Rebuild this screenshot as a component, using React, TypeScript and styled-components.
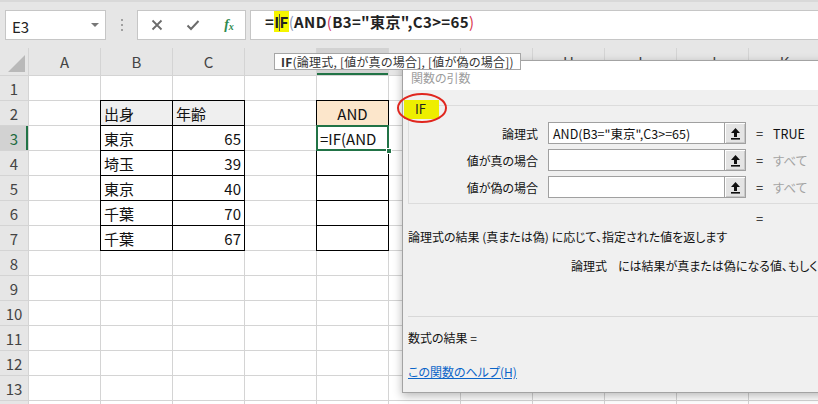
import styled, { createGlobalStyle } from 'styled-components';

const GlobalStyles = createGlobalStyle`
  *, *::before, *::after { box-sizing: border-box; }
  html, body { margin: 0; padding: 0; background: #fff; }
  body {
    font-family: "Noto Sans CJK JP", "Noto Sans", sans-serif;
    overflow: hidden;
  }
`;

const Page = styled.div`
  position: relative;
  width: 818px;
  height: 404px;
  overflow: hidden;
  background: #fff;
`;

/* ---------- formula bar ---------- */

const FormulaBar = styled.div`
  display: flex;
  align-items: center;
  height: 48px;
  padding-left: 5px;
  background: #e6e6e6;
  border-top: 2px solid #d9d9d9;
`;

const NameBox = styled.div`
  display: flex;
  align-items: center;
  justify-content: space-between;
  width: 101px;
  height: 30px;
  padding: 3px 6px 0 6px;
  background: #fff;
  border: 1px solid #c6c6c6;
  font-size: 15px;
  color: #222;
`;

const DropArrow = styled.span`
  width: 0;
  height: 0;
  margin-top: -3px;
  border-left: 4px solid transparent;
  border-right: 4px solid transparent;
  border-top: 4px solid #777;
`;

const Grip = styled.div`
  display: flex;
  flex-direction: column;
  gap: 3px;
  margin: 0 14px 0 15px;

  span {
    width: 2px;
    height: 2px;
    background: #a0a0a0;
  }
`;

const ButtonBox = styled.div`
  display: grid;
  grid-template-columns: repeat(3, 36px);
  align-items: center;
  justify-items: center;
  width: 109px;
  height: 30px;
  padding-left: 1px;
  background: #fff;
  border: 1px solid #c6c6c6;
`;

const Fx = styled.span`
  font-family: "Liberation Serif", serif;
  font-style: italic;
  font-weight: bold;
  font-size: 14px;
  color: #2f8a4f;

  sub {
    font-size: 10px;
    vertical-align: -1px;
  }
`;

const FormulaInput = styled.div`
  flex: 1;
  height: 30px;
  margin-left: 4px;
  padding: 1px 0 0 14px;
  background: #fff;
  border: 1px solid #c6c6c6;
  border-right: none;
  font-size: 15px;
  font-weight: 700;
  line-height: 20px;
  letter-spacing: 0.35px;
  color: #222;
  white-space: nowrap;
`;

const Tok = styled.span<{ $color?: string; $mark?: boolean }>`
  color: ${({ $color }) => $color || '#222'};
  background: ${({ $mark }) => ($mark ? '#f5f500' : 'transparent')};
  font-weight: ${({ $color }) => ($color ? 400 : 700)};
`;

const Caret = styled.span`
  display: inline-block;
  width: 1px;
  height: 17px;
  margin: 0 -0.5px;
  vertical-align: -3px;
  background: #555;
`;

/* ---------- sheet ---------- */

const Sheet = styled.div`
  display: grid;
  grid-template-columns: 28px repeat(11, 71px);
  grid-template-rows: 27px repeat(14, 24px);
  gap: 1px;
  background: #d4d4d4;
`;

const HeadCell = styled.div<{ $active?: boolean; $side?: 'row' | 'col' }>`
  display: flex;
  align-items: center;
  justify-content: center;
  background: ${({ $active }) => ($active ? '#d2d2d2' : '#e6e6e6')};
  color: ${({ $active }) => ($active ? '#1d6b3f' : '#444')};
  font-size: 15px;
  box-shadow: ${({ $active, $side }) =>
    !$active ? 'none' : $side === 'row' ? 'inset -2px 0 #217346' : 'inset 0 -2px #217346'};
`;

const Corner = styled.div`
  display: flex;
  align-items: flex-end;
  justify-content: flex-end;
  padding: 0 3px 3px 0;
  background: #e6e6e6;
`;

const Cell = styled.div<{
  $boxed?: boolean;
  $fill?: string;
  $align?: 'left' | 'right' | 'center';
  $selected?: boolean;
}>`
  position: relative;
  display: flex;
  align-items: center;
  justify-content: ${({ $align }) =>
    $align === 'right' ? 'flex-end' : $align === 'center' ? 'center' : 'flex-start'};
  padding: 1px 3px 0 3px;
  background: ${({ $fill }) => $fill || '#fff'};
  font-size: 15px;
  color: #111;
  white-space: nowrap;
  outline: ${({ $boxed }) => ($boxed ? '1px solid #000' : 'none')};

  ${({ $selected }) =>
    $selected &&
    `
    z-index: 2;
    outline: 2px solid #217346;
    outline-offset: -1px;
    &::after {
      content: '';
      position: absolute;
      right: -4px;
      bottom: -4px;
      width: 6px;
      height: 6px;
      background: #217346;
      border: 1px solid #fff;
    }
  `}
`;

/* ---------- tooltip ---------- */

const Tooltip = styled.div`
  position: absolute;
  left: 274px;
  top: 53px;
  z-index: 20;
  height: 17px;
  padding: 0 6px;
  background: #fff;
  border: 1px solid #a6a6a6;
  font-size: 12px;
  line-height: 15px;
  letter-spacing: 0.25px;
  color: #333;
  white-space: nowrap;
  font-feature-settings: "palt";

  b { font-weight: 700; }
`;

/* ---------- dialog ---------- */

const Dialog = styled.div`
  position: absolute;
  left: 402px;
  top: 60px;
  z-index: 10;
  display: flex;
  flex-direction: column;
  width: 440px;
  height: 333px;
  border: 1px solid #a3a3a3;
  box-shadow: 0 3px 9px rgba(0, 0, 0, 0.28);
  font-size: 12px;
  color: #111;
  font-feature-settings: "palt";
`;

const TitleBar = styled.div`
  display: flex;
  align-items: center;
  height: 29px;
  padding: 5px 0 0 8px;
  background: #fff;
  color: #9c9c9c;
  font-size: 12px;
  line-height: 14px;
`;

const DialogBody = styled.div`
  flex: 1;
  padding-left: 5px;
  background: #f0f0f0;
`;

const Group = styled.div`
  position: relative;
  height: 99px;
  margin-top: 15px;
  padding-top: 16px;
  border: 1px solid #dcdcdc;
  border-right: none;
`;

const Legend = styled.span`
  position: absolute;
  left: -5px;
  top: -6px;
  width: 35px;
  height: 19px;
  padding: 1px 0 0 11px;
  background: #eeee00;
  font-size: 13px;
  line-height: 16px;
  color: #222;
`;

const Ring = styled.svg`
  position: absolute;
  left: -12px;
  top: -13px;
  width: 50px;
  height: 30px;
  overflow: visible;
`;

const ArgGrid = styled.div`
  display: grid;
  grid-template-columns: 139px 198px 27px 1fr;
  grid-auto-rows: 22px;
  row-gap: 5px;
  align-items: center;
`;

const ArgLabel = styled.div`
  padding-right: 10px;
  text-align: right;
  white-space: nowrap;
`;

const ArgInput = styled.div`
  display: flex;
  height: 22px;
  background: #fff;
  border: 1px solid #a0a0a0;
`;

const ArgText = styled.div`
  flex: 1;
  padding: 2px 0 0 4px;
  font-size: 12.5px;
  line-height: 17px;
  white-space: nowrap;
  overflow: hidden;
`;

const RefButton = styled.div`
  display: flex;
  align-items: center;
  justify-content: center;
  width: 21px;
  background: #e4e4e4;
  border-left: 1px solid #a0a0a0;
  box-shadow: inset 1px 1px #fff, inset -1px -1px #c8c8c8;
`;

const Eq = styled.div`
  text-align: center;
  font-size: 13px;
`;

const ArgValue = styled.div<{ $muted?: boolean }>`
  color: ${({ $muted }) => ($muted ? '#a3a3a3' : '#111')};
  font-size: 12.5px;
  white-space: nowrap;
`;

const EqLine = styled(ArgGrid)`
  grid-auto-rows: 16px;
  margin-top: 6px;
  padding-left: 1px;
`;

const Line = styled.div<{ $top: number; $indent?: number }>`
  height: 16px;
  margin-top: ${({ $top }) => $top}px;
  padding-left: ${({ $indent }) => $indent || 0}px;
  line-height: 16px;
  white-space: nowrap;
`;

const ArgName = styled.span`
  margin-right: 11px;
`;

const Separator = styled.div`
  margin-top: 42px;
  border-top: 1px solid #d8d8d8;
`;

const HelpLink = styled.a`
  color: #0a64c8;
  text-decoration: underline;
`;

/* ---------- data ---------- */

const COLS = ['A', 'B', 'C', 'D', 'E', 'F', 'G', 'H', 'I', 'J', 'K'];
// columns whose header letter sits under the tooltip
const HIDDEN = ['D', 'E', 'F', 'G'];

const people: [string, number][] = [
  ['東京', 65],
  ['埼玉', 39],
  ['東京', 40],
  ['千葉', 70],
  ['千葉', 67],
];

function RefArrow() {
  return (
    <svg width="11" height="13" viewBox="0 0 11 13">
      <path d="M5.5 1 L10 6 L7 6 L7 10 L4 10 L4 6 L1 6 Z" fill="#111" />
      <rect x="1" y="11" width="9" height="1.6" fill="#111" />
    </svg>
  );
}

function renderCell(row: number, col: number) {
  const key = `${row}-${col}`;
  const c = COLS[col];
  if (row === 2) {
    if (c === 'B') return <Cell key={key} $boxed $fill="#efefef">出身</Cell>;
    if (c === 'C') return <Cell key={key} $boxed $fill="#efefef">年齢</Cell>;
    if (c === 'E') return <Cell key={key} $boxed $fill="#fce6cb" $align="center">AND</Cell>;
  }
  if (row >= 3 && row <= 7) {
    const p = people[row - 3];
    if (c === 'B') return <Cell key={key} $boxed>{p[0]}</Cell>;
    if (c === 'C') return <Cell key={key} $boxed $align="right">{p[1]}</Cell>;
    if (c === 'E') {
      return row === 3 ? (
        <Cell key={key} $boxed $selected>=IF(AND</Cell>
      ) : (
        <Cell key={key} $boxed />
      );
    }
  }
  return <Cell key={key} />;
}

export default function App() {
  const rows = Array.from({ length: 14 }, (_, i) => i + 1);

  return (
    <>
      <GlobalStyles />
      <Page>
        <FormulaBar>
          <NameBox>
            E3
            <DropArrow />
          </NameBox>
          <Grip>
            <span />
            <span />
            <span />
          </Grip>
          <ButtonBox>
            <svg width="12" height="12" viewBox="0 0 12 12">
              <path d="M1.5 1.5 L10.5 10.5 M10.5 1.5 L1.5 10.5" stroke="#6b6b6b" strokeWidth="1.8" />
            </svg>
            <svg width="14" height="12" viewBox="0 0 14 12">
              <path d="M1.5 6.5 L5 10 L12.5 2" stroke="#6b6b6b" strokeWidth="2" fill="none" />
            </svg>
            <Fx>
              f<sub>x</sub>
            </Fx>
          </ButtonBox>
          <FormulaInput>
            <Tok>=</Tok>
            <Tok $mark>
              I<Caret />F
            </Tok>
            <Tok $color="#8d9bbd">(</Tok>
            <Tok>AND</Tok>
            <Tok $color="#cc3366">(</Tok>
            <Tok>B3="東京",C3&gt;=65</Tok>
            <Tok $color="#d9364a">)</Tok>
          </FormulaInput>
        </FormulaBar>

        <Sheet>
          <Corner>
            <svg width="17" height="17" viewBox="0 0 17 17">
              <path d="M17 0 L17 17 L0 17 Z" fill="#b9b9b9" />
            </svg>
          </Corner>
          {COLS.map((c) => (
            <HeadCell key={c} $side="col" $active={c === 'E'}>
              {HIDDEN.includes(c) ? null : c}
            </HeadCell>
          ))}
          {rows.map((r) => [
            <HeadCell key={`h${r}`} $side="row" $active={r === 3}>
              {r < 14 ? r : null}
            </HeadCell>,
            ...COLS.map((_, ci) => renderCell(r, ci)),
          ])}
        </Sheet>

        <Dialog>
          <TitleBar>関数の引数</TitleBar>
          <DialogBody>
            <Group>
              <Legend>IF</Legend>
              <Ring viewBox="0 0 50 30">
                <ellipse cx="25" cy="15" rx="24" ry="14" fill="none" stroke="#e0261e" strokeWidth="2" />
              </Ring>
              <ArgGrid>
                <ArgLabel>論理式</ArgLabel>
                <ArgInput>
                  <ArgText>AND(B3="東京",C3&gt;=65)</ArgText>
                  <RefButton>
                    <RefArrow />
                  </RefButton>
                </ArgInput>
                <Eq>=</Eq>
                <ArgValue>TRUE</ArgValue>

                <ArgLabel>値が真の場合</ArgLabel>
                <ArgInput>
                  <ArgText />
                  <RefButton>
                    <RefArrow />
                  </RefButton>
                </ArgInput>
                <Eq>=</Eq>
                <ArgValue $muted>すべて</ArgValue>

                <ArgLabel>値が偽の場合</ArgLabel>
                <ArgInput>
                  <ArgText />
                  <RefButton>
                    <RefArrow />
                  </RefButton>
                </ArgInput>
                <Eq>=</Eq>
                <ArgValue $muted>すべて</ArgValue>
              </ArgGrid>
            </Group>

            <EqLine>
              <span />
              <span />
              <Eq>=</Eq>
            </EqLine>

            <Line $top={3}>論理式の結果 (真または偽) に応じて、指定された値を返します</Line>
            <Line $top={13} $indent={163}>
              <ArgName>論理式</ArgName>
              には結果が真または偽になる値、もしくは数式を指定します。
            </Line>

            <Separator />
            <Line $top={13}>数式の結果 =</Line>
            <Line $top={18}>
              <HelpLink href="#">この関数のヘルプ(H)</HelpLink>
            </Line>
          </DialogBody>
        </Dialog>

        <Tooltip>
          <b>IF</b>(論理式, [値が真の場合], [値が偽の場合])
        </Tooltip>
      </Page>
    </>
  );
}
